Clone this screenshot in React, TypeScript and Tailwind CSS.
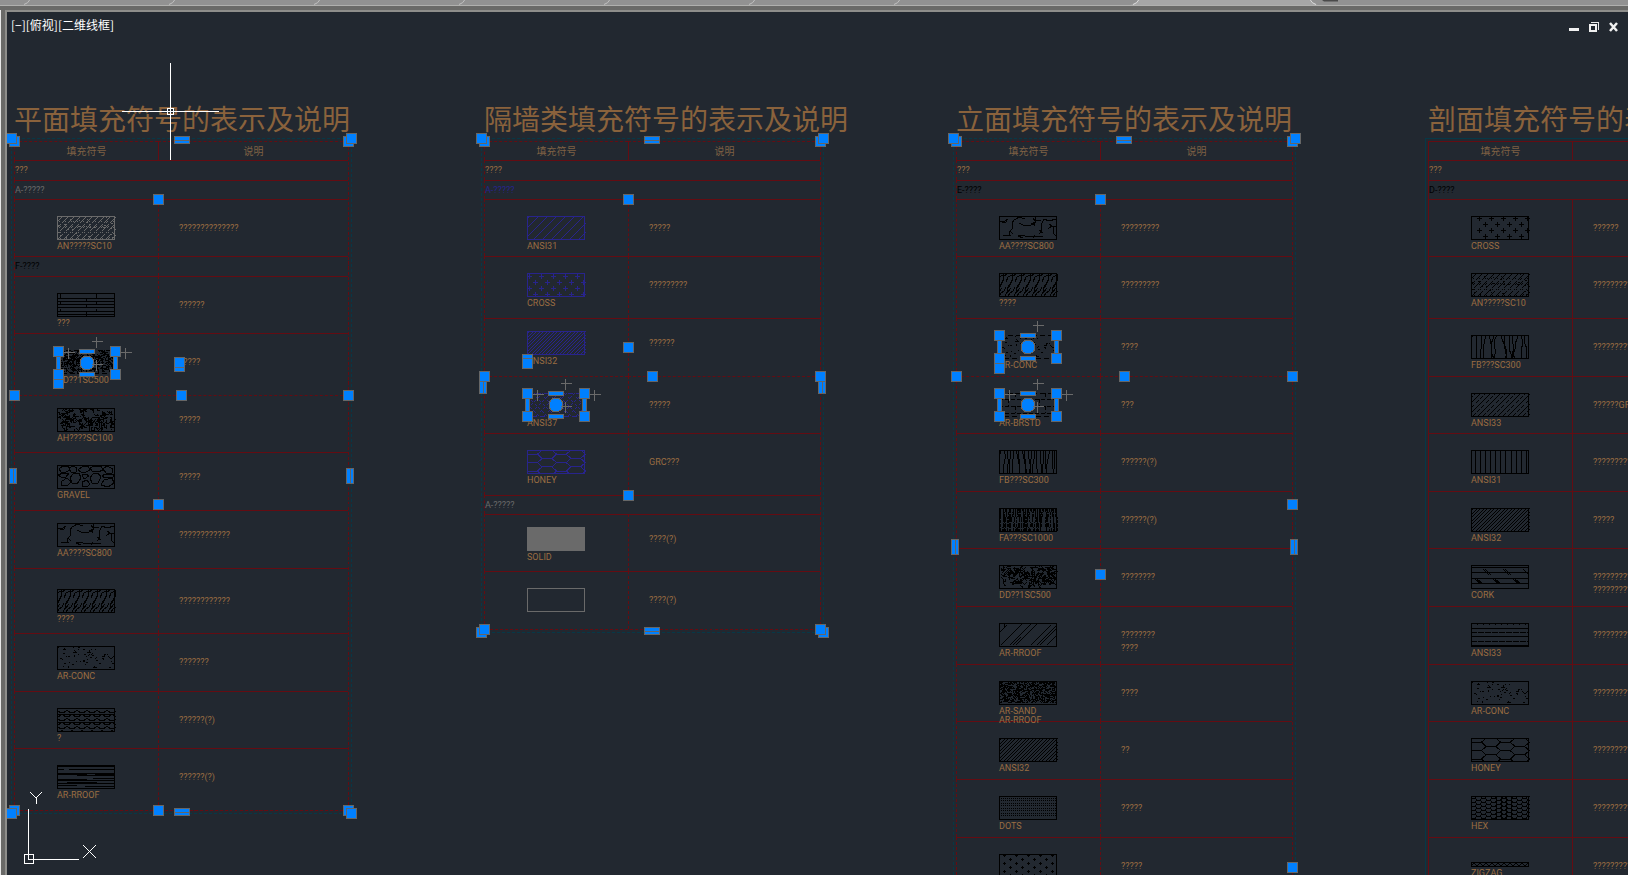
import { Fragment, type ReactNode } from "react";

const CELL_FONT = "font-['Roboto','Liberation_Sans',sans-serif]";
const CJK_FONT = "font-['Noto_Sans_CJK_SC',sans-serif]";

/* ---------- hatch patterns ---------- */

const W = 58;
const H = 23;

function rng(seed: number) {
  let s = seed;
  return () => {
    s = (s * 16807) % 2147483647;
    return s / 2147483647;
  };
}

function diagonals(step: number, shift = 0) {
  let d = "";
  for (let x = -H + shift; x < W + H; x += step) d += `M${x} ${H}L${x + H} 0`;
  return d;
}

function verticals(step: number, wobble: number, seed: number) {
  const r = rng(seed);
  let d = "";
  for (let x = 2; x < W; x += step) {
    let cx = x;
    d += `M${cx} 0`;
    for (let y = 4; y <= 24; y += 5) {
      cx += Math.round((r() - 0.5) * wobble);
      d += `L${cx} ${y}`;
    }
  }
  return d;
}

function specks(count: number, seed: number, size = 1) {
  const r = rng(seed);
  let d = "";
  for (let i = 0; i < count; i++) {
    const x = 1 + Math.floor(r() * (W - 2));
    const y = 1 + Math.floor(r() * (H - 2));
    const w = r() < 0.3 ? size + 1 : size;
    d += `M${x} ${y + 0.5}h${w}`;
  }
  return d;
}

function squiggles(count: number, seed: number) {
  const r = rng(seed);
  const turns = ["h3", "v3", "l2 2", "l2 -2", "h-2", "v-2"];
  let d = "";
  for (let i = 0; i < count; i++) {
    d += `M${2.5 + Math.floor(r() * (W - 5))} ${2.5 + Math.floor(r() * (H - 4))}`;
    d += turns[Math.floor(r() * turns.length)] + turns[Math.floor(r() * turns.length)];
  }
  return d;
}

function plusses(dx: number, dy: number, x0: number, y0: number, size: number) {
  let d = "";
  let row = 0;
  for (let y = y0 + 0.5; y < H + 2; y += dy, row++) {
    for (let x = x0 + 0.5 + (row % 2 ? dx / 2 : 0); x < W; x += dx) {
      d += `M${x - size - 0.5} ${y}h${size * 2 + 1}M${x} ${y - size - 0.5}v${size * 2 + 1}`;
    }
  }
  return d;
}

/* Flat-topped hexagons: s is half the pitch of two columns over three, h the row pitch. */
function hexes(s: number, h: number, x0: number) {
  let d = "";
  let col = 0;
  for (let x = x0; x < W; x += s * 1.5, col++) {
    for (let y = col % 2 ? h / 2 : 0; y < H + h; y += h) {
      d += `M${x} ${y}l${s / 2} ${-h / 2}h${s}l${s / 2} ${h / 2}l${-s / 2} ${h / 2}h${-s}z`;
    }
  }
  return d;
}

function scallops() {
  let d = "";
  for (let y = 2, row = 0; y < H; y += 4, row++) {
    for (let x = row % 2 ? -5 : 0; x < W; x += 10) d += `M${x} ${y}l3 2.500h4l3 -2.500`;
  }
  return d + "M0 6.500H58M0 14.500H58";
}

function strokesAslant() {
  let d = "";
  for (let x = -4; x < W; x += 9) {
    d += `M${x + 1} 23l2 -4l1 -5l4 -6l1 -5l3 -2M${x + 4} 23l2 -3l3 -2l2 -4M${x + 2} 9l2 -5l4 -2M${x + 8} 1v6l-2 5l-2 3M${x + 3} 20l4 -5`;
  }
  return d;
}

type Hatch = { d: string; dash?: string; width?: number };

const CRACKS =
  "M1 5h5l3 -2M3 7l4 -1l1 -2M16 3l-3 4l1 5l-4 4l1 3l-7 0M11 15l3 3M16 4l4 -3l6 2M20 7l4 2h8l3 -1v2M24 22l-5 -2l3 -1l8 2l8 -1l6 1M34 2l3 4l-5 2M36 1v4l6 -1M45 3l-3 6l1 6l-3 3M40 14l4 3M45 3l5 2l7 -2M49 13l4 -3l4 0M50 8l4 3v6l4 4M36 19l-2 3";

const HATCHES: Record<string, Hatch[]> = {
  stone: [{ d: diagonals(6), dash: "7 1 2 1" }, { d: diagonals(6, 2), dash: "2 6" }, { d: specks(40, 11) }],
  planks: [
    { d: "M0 5.5h58M0 8.5h58M0 11.5h58M0 14.5h58M0 18.5h58M0 21.5h58" },
    { d: "M3.5 1v4M39.5 1v4M29.5 5v4M3.5 9v3M39.5 9v3M29.5 12v3M3.5 16v3M39.5 16v3M29.5 19v4" },
  ],
  dense: [{ d: squiggles(150, 5) }, { d: specks(120, 8) }],
  crazed: [{ d: squiggles(140, 17) }, { d: specks(60, 3) }],
  gravel: [
    {
      d: "M2 4l4 -3h5l2 4l-4 2h-5zM12 3l4 -2l4 2l-1 4l-5 0zM21 5l5 -4h5l2 4l-4 2h-5zM33 3l4 -2h7l2 4l-5 2l-6 -1zM46 4l4 -3l6 3l-1 4h-6zM1 10l5 -2h6l-3 4l-5 0zM4 20l1 -4l5 -3l4 4l-4 4zM15 18l-2 -5l3 -4l6 -1l2 5l-4 6zM25 21l0 -4l5 -2l3 4l-3 3zM35 18l-2 -5l3 -4l5 -1l3 4l-3 6zM44 20l3 -5l8 -2l2 5l-6 4zM45 11l3 -2h8v3l-8 1zM25 10l4 -1l3 2l-5 3z",
    },
  ],
  cracks: [{ d: CRACKS }],
  aslant: [{ d: strokesAslant() }],
  concrete: [{ d: specks(58, 23) }, { d: "M17 4l2 2h-3M30 6h3l-1 -2M49 9l-2 -1v3M6 3h3M11 20l1 2M36 21h3M26 14h2" }],
  scallops: [{ d: scallops() }],
  wood: [
    { d: "M0 1.5h58M0 4.5h7M12 4.5h46M0 8.5h58M0 9.5h18M20 10.5h38M0 14.5h30M36 13.5h22M0 15.5h58M4 18.5h54M0 20.5h20M28 21.5h30" },
    { d: "M0 9.5h30M38 9.5h20M0 18.5h22M10 17.5h30" },
  ],
  ansi31: [{ d: diagonals(9, 3) }],
  cross: [{ d: plusses(12, 6, 2, 3, 2) }],
  crossSection: [{ d: plusses(12, 6, 8, 2, 2) }],
  ansi32: [{ d: diagonals(7) }, { d: diagonals(7, 3) }],
  ansi37: [{ d: diagonals(8), dash: "3 2" }, { d: diagonals(8, 4).replace(/M(-?\d+) 23L(-?\d+) 0/g, "M$1 0L$2 23"), dash: "3 2" }],
  honey: [{ d: hexes(9.6, 8.4, -4) }],
  brick: [{ d: "M0 6.5h58M0 13.5h58M0 20.5h58M16.5 0v6M46.5 0v6M9.5 6v7M40.5 6v7M16.5 13v7M46.5 13v7", dash: "4 2" }],
  fibre: [{ d: verticals(3, 3, 9) }],
  fibreLoose: [{ d: verticals(4, 4, 33) }],
  fibreDense: [{ d: verticals(2, 2, 4), dash: "5 1 8 1" }, { d: verticals(3, 2, 42), dash: "3 1" }],
  maze: [{ d: squiggles(190, 71) }],
  roof: [{ d: "M0 10l8 -8M2 22l21 -21M11 22l21 -21M14 22l8 -8M17 22l21 -21M32 22l20 -20M38 22l20 -20M41 22l17 -17M48 22l10 -10M5 4v-3" }],
  sand: [{ d: specks(800, 13) }],
  dots: [{ d: [3, 5, 8, 10, 13, 15, 18, 20].map((y) => `M2 ${y - 0.5}H57`).join(""), dash: "1 1" }],
  ticks: [{ d: plusses(12, 4, 5, 1, 1) }],
  ansi33: [{ d: diagonals(10) }, { d: diagonals(10, 5), dash: "4 2" }],
  bars: [{ d: [4, 9, 14, 19, 24, 29, 34, 40, 45, 50, 55].map((x) => `M${x}.5 0V23`).join("") }],
  cork: [
    { d: "M0 2.5h58M0 7.5h58M0 13.5h58M0 18.5h58" },
    { d: "M12 4l6 6M14 4l6 6M32 4l6 6M34 4l6 6M52 4l6 6M4 14l6 5M6 14l6 5M22 14l6 5M24 14l6 5M42 14l6 5M44 14l6 5" },
  ],
  lines: [{ d: "M0 5.5h58M0 13.5h58M0 22.5h58" }, { d: "M0 9.5h58M0 18.5h58", dash: "6 1" }, { d: "M0 1.5h58", dash: "1 5" }],
  hex: [{ d: hexes(3.4, 4, -1) }],
  zigzag: [{ d: "M0 4l3 -3l3 3l3 -3l3 3l3 -3l3 3l3 -3l3 3l3 -3l3 3l3 -3l3 3l3 -3l3 3l3 -3l3 3l3 -3l3 3l3 -3" }],
  empty: [],
  solid: [],
};

type Tone = "black" | "gray" | "navy";
const TONES: Record<Tone, string> = { black: "text-black", gray: "text-[#6a6a6a]", navy: "text-[#28248c]" };

function Swatch({ hatch, tone, picked }: { hatch: string; tone: Tone; picked?: boolean }) {
  const h = hatch === "zigzag" ? 4 : H;
  return (
    <svg
      width={W + 1}
      height={h + 1}
      viewBox={`0 0 ${W + 1} ${h + 1}`}
      className={`block ${TONES[tone]} ${hatch === "zigzag" ? "mt-2" : ""}`}
      shapeRendering="crispEdges"
      aria-hidden="true"
    >
      <g fill="none" stroke="currentColor">
        {HATCHES[hatch].map((layer, i) => (
          <path key={i} d={layer.d} strokeDasharray={layer.dash} strokeWidth={layer.width ?? 1} />
        ))}
        <rect
          x="0.5"
          y="0.5"
          width={W - 1}
          height={h}
          strokeDasharray={picked ? "5 3" : undefined}
          fill={hatch === "solid" ? "currentColor" : "none"}
        />
      </g>
    </svg>
  );
}

/* ---------- grips ---------- */

const GRIP = { fill: "#0080ff", stroke: "#666666" };

function Grip({ x, y }: { x: number; y: number }) {
  return <rect x={x - 5} y={y - 5} width="10" height="10" {...GRIP} />;
}

function BarH({ x, y }: { x: number; y: number }) {
  return (
    <g>
      <rect x={x - 7} y={y - 4} width="15" height="7" {...GRIP} />
      <path d={`M${x - 7} ${y}h15`} stroke={GRIP.stroke} />
    </g>
  );
}

function BarV({ x, y }: { x: number; y: number }) {
  return (
    <g>
      <rect x={x - 4} y={y - 8} width="7" height="15" {...GRIP} />
      <path d={`M${x} ${y - 8}v15`} stroke={GRIP.stroke} />
    </g>
  );
}

/* Grip set of a picked hatch, whose top left corner is x, y. */
function HatchGrips({ x, y, crosses = 4 }: { x: number; y: number; crosses?: number }) {
  const marks = [
    [38, -10],
    [10, 1],
    [67, 1],
    [38, 13],
  ].slice(0, crosses);
  return (
    <g>
      <rect x={x - 2} y={y + 5} width="4" height="13" {...GRIP} />
      <rect x={x + 55} y={y + 5} width="4" height="13" {...GRIP} />
      <rect x={x + 21} y={y - 2} width="15" height="4" {...GRIP} />
      <rect x={x + 21} y={y + 21} width="15" height="4" {...GRIP} />
      <Grip x={x} y={y} />
      <Grip x={x + 57} y={y} />
      <Grip x={x} y={y + 23} />
      <Grip x={x + 57} y={y + 23} />
      <circle cx={x + 28.5} cy={y + 11.5} r="7" {...GRIP} />
      <path d={marks.map(([mx, my]) => `M${x + mx - 5} ${y + my}h11M${x + mx} ${y + my - 5}v11`).join("")} stroke="#6a6a6a" fill="none" />
    </g>
  );
}

/* ---------- sheets ---------- */

type Level = "high" | "mid" | "low";

type Row = {
  h: number;
  band?: string;
  bandTone?: string;
  split?: boolean;
  hatch?: string;
  label?: string;
  extra?: string;
  note?: string[];
  at?: Level;
  noteAt?: Level;
  tone?: Tone;
  picked?: boolean;
  dashed?: boolean;
};

type Sheet = { title: string; open?: boolean; rows: Row[]; grips?: ReactNode; width: string; end: number; side: number };

const TAN = "text-[#8a623c]";
const TAN_SMALL = "text-[#9a6d42]";

const SHEETS: Sheet[] = [
  {
    title: "平面填充符号的表示及说明",
    width: "w-[334px]",
    end: 669,
    side: 334,
    rows: [
      { h: 20, band: "???" },
      { h: 19, band: "A-?????", bandTone: "text-[#6a6a6a]" },
      { h: 57, hatch: "stone", label: "AN?????SC10", note: ["??????????????"], tone: "gray" },
      { h: 20, band: "F-????", bandTone: "text-black", split: true },
      { h: 57, hatch: "planks", label: "???", note: ["??????"] },
      { h: 62, hatch: "dense", label: "DD??1SC500", note: ["?????"], picked: true },
      { h: 57, hatch: "crazed", label: "AH????SC100", note: ["?????"], at: "high", dashed: true },
      { h: 58, hatch: "gravel", label: "GRAVEL", note: ["?????"], at: "high" },
      { h: 58, hatch: "cracks", label: "AA????SC800", note: ["????????????"], at: "high" },
      { h: 65, hatch: "aslant", label: "????", note: ["????????????"], at: "low" },
      { h: 58, hatch: "concrete", label: "AR-CONC", note: ["???????"], at: "high", noteAt: "mid" },
      { h: 57, hatch: "scallops", label: "?", note: ["??????(?)"] },
      { h: 62, hatch: "wood", label: "AR-RROOF", note: ["??????(?)"] },
    ],
    grips: (
      <>
        <Grip x={0} y={0} />
        <Grip x={-3} y={-3} />
        <Grip x={334} y={0} />
        <Grip x={337} y={-3} />
        <BarH x={167} y={-1} />
        <Grip x={144} y={58} />
        <Grip x={165} y={225} />
        <Grip x={165} y={221} />
        <Grip x={44} y={242} />
        <HatchGrips x={44} y={210} />
        <Grip x={0} y={254} />
        <Grip x={167} y={254} />
        <Grip x={334} y={254} />
        <BarV x={-1} y={335} />
        <BarV x={336} y={335} />
        <Grip x={144} y={363} />
        <Grip x={0} y={669} />
        <Grip x={-3} y={672} />
        <Grip x={144} y={669} />
        <BarH x={167} y={671} />
        <Grip x={334} y={669} />
        <Grip x={337} y={672} />
      </>
    ),
  },
  {
    title: "隔墙类填充符号的表示及说明",
    width: "w-[336px]",
    end: 488,
    side: 336,
    rows: [
      { h: 20, band: "????" },
      { h: 19, band: "A-?????", bandTone: "text-[#28248c]" },
      { h: 57, hatch: "ansi31", label: "ANSI31", note: ["?????"], tone: "navy" },
      { h: 62, hatch: "cross", label: "CROSS", note: ["?????????"], tone: "navy" },
      { h: 58, hatch: "ansi32", label: "ANSI32", note: ["??????"], tone: "navy", at: "high" },
      { h: 57, hatch: "ansi37", label: "ANSI37", note: ["?????"], tone: "navy", picked: true, dashed: true },
      { h: 62, hatch: "honey", label: "HONEY", note: ["GRC???"], tone: "navy" },
      { h: 19, band: "A-?????", bandTone: "text-[#6a6a6a]" },
      { h: 57, hatch: "solid", label: "SOLID", note: ["????(?)"], tone: "gray", at: "high" },
      { h: 58, hatch: "empty", label: "", note: ["????(?)"], tone: "gray" },
    ],
    grips: (
      <>
        <Grip x={0} y={0} />
        <Grip x={-3} y={-3} />
        <Grip x={336} y={0} />
        <Grip x={339} y={-3} />
        <BarH x={167} y={-1} />
        <Grip x={144} y={58} />
        <Grip x={144} y={206} />
        <Grip x={43} y={218} />
        <Grip x={43} y={222} />
        <BarV x={-1} y={245} />
        <BarV x={338} y={245} />
        <Grip x={0} y={235} />
        <Grip x={168} y={235} />
        <Grip x={336} y={235} />
        <HatchGrips x={43} y={252} />
        <Grip x={144} y={354} />
        <Grip x={-3} y={491} />
        <Grip x={0} y={488} />
        <BarH x={167} y={490} />
        <Grip x={339} y={491} />
        <Grip x={336} y={488} />
      </>
    ),
  },
  {
    title: "立面填充符号的表示及说明",
    width: "w-[336px]",
    end: 760,
    side: 336,
    rows: [
      { h: 20, band: "???" },
      { h: 19, band: "E-????", bandTone: "text-black" },
      { h: 57, hatch: "cracks", label: "AA????SC800", note: ["?????????"] },
      { h: 62, hatch: "aslant", label: "????", note: ["?????????"] },
      { h: 58, hatch: "concrete", label: "AR-CONC", note: ["????"], picked: true },
      { h: 57, hatch: "brick", label: "AR-BRSTD", note: ["???"], picked: true, dashed: true },
      { h: 58, hatch: "fibre", label: "FB???SC300", note: ["??????(?)"] },
      { h: 57, hatch: "fibreDense", label: "FA???SC1000", note: ["??????(?)"] },
      { h: 58, hatch: "maze", label: "DD??1SC500", note: ["????????"] },
      { h: 58, hatch: "roof", label: "AR-RROOF", note: ["????????", "????"] },
      { h: 57, hatch: "sand", label: "AR-SAND", extra: "AR-RROOF", note: ["????"] },
      { h: 58, hatch: "ansi32", label: "ANSI32", note: ["??"] },
      { h: 58, hatch: "dots", label: "DOTS", note: ["?????"] },
      { h: 58, hatch: "ticks", label: "", note: ["?????"] },
    ],
    grips: (
      <>
        <Grip x={0} y={0} />
        <Grip x={-3} y={-3} />
        <Grip x={336} y={0} />
        <Grip x={339} y={-3} />
        <BarH x={167} y={-1} />
        <Grip x={144} y={58} />
        <HatchGrips x={43} y={194} crosses={1} />
        <Grip x={43} y={227} />
        <Grip x={0} y={235} />
        <Grip x={168} y={235} />
        <Grip x={336} y={235} />
        <HatchGrips x={43} y={252} />
        <Grip x={336} y={363} />
        <BarV x={-1} y={406} />
        <BarV x={338} y={406} />
        <Grip x={144} y={433} />
        <Grip x={336} y={726} />
      </>
    ),
  },
  {
    title: "剖面填充符号的表示及说明",
    open: true,
    width: "w-[336px]",
    end: 760,
    side: 336,
    rows: [
      { h: 20, band: "???" },
      { h: 19, band: "D-????", bandTone: "text-black" },
      { h: 57, hatch: "crossSection", label: "CROSS", note: ["??????"] },
      { h: 62, hatch: "stone", label: "AN?????SC10", note: ["?????????"] },
      { h: 58, hatch: "fibreLoose", label: "FB???SC300", note: ["?????????"] },
      { h: 57, hatch: "ansi33", label: "ANSI33", note: ["??????GRC"] },
      { h: 58, hatch: "bars", label: "ANSI31", note: ["?????????"] },
      { h: 57, hatch: "ansi32", label: "ANSI32", note: ["?????"] },
      { h: 58, hatch: "cork", label: "CORK", note: ["?????????", "?????????"] },
      { h: 58, hatch: "lines", label: "ANSI33", note: ["?????????"] },
      { h: 57, hatch: "concrete", label: "AR-CONC", note: ["?????????"] },
      { h: 58, hatch: "honey", label: "HONEY", note: ["?????????"] },
      { h: 58, hatch: "hex", label: "HEX", note: ["?????????"] },
      { h: 58, hatch: "zigzag", label: "ZIGZAG", note: ["?????????"] },
    ],
  },
];

const SWATCH_PAD: Record<Level, string> = { high: "pt-3", mid: "pt-4", low: "pt-5" };
const NOTE_PAD: Record<Level, string> = { high: "pt-[18px]", mid: "pt-[22px]", low: "pt-[26px]" };

function SheetView({ sheet }: { sheet: Sheet }) {
  const side = sheet.open ? "border-solid" : "border-dashed";
  return (
    <section className={`shrink-0 ${sheet.width}`}>
      <h2 className={`h-10 text-[28px] leading-[34px] whitespace-nowrap ${CJK_FONT} ${TAN}`}>{sheet.title}</h2>
      <div className="relative">
        <table className="w-full table-fixed border-separate border-spacing-0">
          <colgroup>
            <col className="w-36" />
            <col />
          </colgroup>
          <thead>
            <tr className={`h-[19px] text-[10px] leading-none ${CJK_FONT} text-[#7f6144]`}>
              <th className={`border-t border-l border-[#640c12] p-0 font-normal ${side}`}>填充符号</th>
              <th className={`border-t border-l border-t-[#640c12] border-l-[#640c12] p-0 font-normal ${sheet.open ? "" : "[border-top-style:dashed]"}`}>
                说明
              </th>
            </tr>
          </thead>
          <tbody className={CELL_FONT}>
            {sheet.rows.map((row, i) => {
              const at = row.at ?? "mid";
              const top = row.dashed ? "[border-top-style:dashed]" : "[border-top-style:solid]";
              return (
                <tr key={i} style={{ height: row.h }}>
                  {row.band ? (
                    <>
                      <td
                        colSpan={row.split ? 1 : 2}
                        className={`border-t border-l border-[#640c12] p-0 text-[9px] leading-none ${side} ${top} ${row.bandTone ?? TAN_SMALL}`}
                      >
                        {row.band}
                      </td>
                      {row.split && <td className={`border-t border-l border-[#640c12] p-0 ${side} ${top}`} />}
                    </>
                  ) : (
                    <>
                      <td className={`border-t border-l border-[#640c12] p-0 align-top ${side} ${top}`}>
                        <div className={`h-0 pl-[42px] text-[9px] leading-[9px] whitespace-nowrap ${SWATCH_PAD[at]} ${TAN_SMALL}`}>
                          <Swatch hatch={row.hatch ?? "empty"} tone={row.tone ?? "black"} picked={row.picked} />
                          <p className="pt-0.5">{row.label}</p>
                          {row.extra && <p>{row.extra}</p>}
                        </div>
                      </td>
                      <td className={`border-t border-l border-[#640c12] p-0 align-top ${side} ${top}`}>
                        <div className={`h-0 pl-5 text-[9px] leading-[13px] whitespace-nowrap ${NOTE_PAD[row.noteAt ?? at]} ${TAN_SMALL}`}>
                          {row.note?.map((line, n) => (
                            <Fragment key={n}>
                              {n > 0 && <br />}
                              {line}
                            </Fragment>
                          ))}
                        </div>
                      </td>
                    </>
                  )}
                </tr>
              );
            })}
          </tbody>
        </table>
        <svg
          className="pointer-events-none absolute top-0 left-0 overflow-visible"
          width="1"
          height="1"
          shapeRendering="crispEdges"
          aria-hidden="true"
        >
          <g transform="translate(0.5 0.5)">
            <rect
              x="-3"
              y="-3"
              width={sheet.side + 6}
              height={sheet.end + 6}
              fill="none"
              stroke="#063847"
              strokeDasharray={sheet.open ? undefined : "3 2"}
            />
            {!sheet.open && (
              <path
                d={`M0 ${sheet.end}H${sheet.side}M${sheet.side} 0V${sheet.end}`}
                stroke="#640c12"
                strokeDasharray="3 2"
                fill="none"
              />
            )}
            {sheet.grips}
          </g>
        </svg>
      </div>
    </section>
  );
}

/* ---------- window ---------- */

function WindowButtons() {
  return (
    <div className="flex gap-2 pt-2.5 pr-2">
      <button aria-label="最小化" className="h-3 w-3">
        <svg width="12" height="12" shapeRendering="crispEdges">
          <path d="M1 6h10v3H1z" fill="#f0f0f0" />
        </svg>
      </button>
      <button aria-label="还原" className="h-3 w-3">
        <svg width="12" height="12" shapeRendering="crispEdges">
          <path d="M3 0h8v8h-1V1H3z" fill="#e8e8e8" />
          <path d="M1 2h8v8H1zM3 4v4h4v-4z" fill="#f0f0f0" fillRule="evenodd" />
        </svg>
      </button>
      <button aria-label="关闭" className="h-3 w-3">
        <svg width="12" height="12">
          <path d="M2 1l7 8M9 1l-7 8" stroke="#f0f0f0" strokeWidth="2.500" />
        </svg>
      </button>
    </div>
  );
}

export default function App() {
  return (
    <div className="flex h-screen flex-col overflow-hidden bg-[#6a6a68]">
      <svg className="block h-[5px] w-full shrink-0 bg-[#929292]" aria-hidden="true">
        <path d="M24 4.500q4 -1 6 -5M169 4.500q4 -1 6 -5M314 4.500q4 -1 6 -5M459 4.500q4 -1 6 -5M604 4.500q4 -1 6 -5M749 4.500q4 -1 6 -5M894 4.500q4 -1 6 -5" stroke="#c0c0c0" fill="none" />
        <path d="M1130 5q6 -1 8 -5H1310q3 4 8 5z" fill="#a6a6a6" />
        <path d="M1133 4.500q4 -1 6 -5M1310 -0.500q2 4 6 5" stroke="#dcdcdc" fill="none" />
        <path d="M1322 0h16v1.500h-14z" fill="#4a4a4a" />
      </svg>
      <div className="h-px shrink-0 bg-[#b0b0ae]" />
      <div className="h-1 shrink-0" />
      <div className="flex min-h-0 flex-1">
        <div className="w-px bg-[#e8e8e8]" />
        <main className="relative ml-1 min-w-0 flex-1 overflow-hidden border-t-2 border-l-2 border-[#8e8e8b] bg-[#222830]">
          <header className="flex h-[89px] items-start justify-between">
            <p className={`pt-1 pl-1 text-[12px] leading-[18px] text-white ${CJK_FONT}`}>[−][俯视][二维线框]</p>
            <WindowButtons />
          </header>
          <div className="flex gap-[136px] pl-[7px]">
            {SHEETS.map((sheet) => (
              <SheetView key={sheet.title} sheet={sheet} />
            ))}
          </div>

          <svg
            className="pointer-events-none absolute top-[51px] left-[115px]"
            width="98"
            height="98"
            stroke="#ffffff"
            fill="none"
            shapeRendering="crispEdges"
            aria-hidden="true"
          >
            <path d="M48.500 0v97M0 48.500h97" />
            <rect x="45.500" y="45.500" width="6" height="6" />
          </svg>

          <svg
            className="pointer-events-none absolute bottom-2 left-4"
            width="80"
            height="75"
            stroke="#ffffff"
            fill="none"
            shapeRendering="crispEdges"
            aria-hidden="true"
          >
            <rect x="1.500" y="62.500" width="9" height="9" />
            <path d="M5.500 17v50.500H56" />
            <path d="M7 0l6 6l6 -6M13.500 6v6M60 53l13 13M73 53l-13 13" />
          </svg>
        </main>
      </div>
    </div>
  );
}
